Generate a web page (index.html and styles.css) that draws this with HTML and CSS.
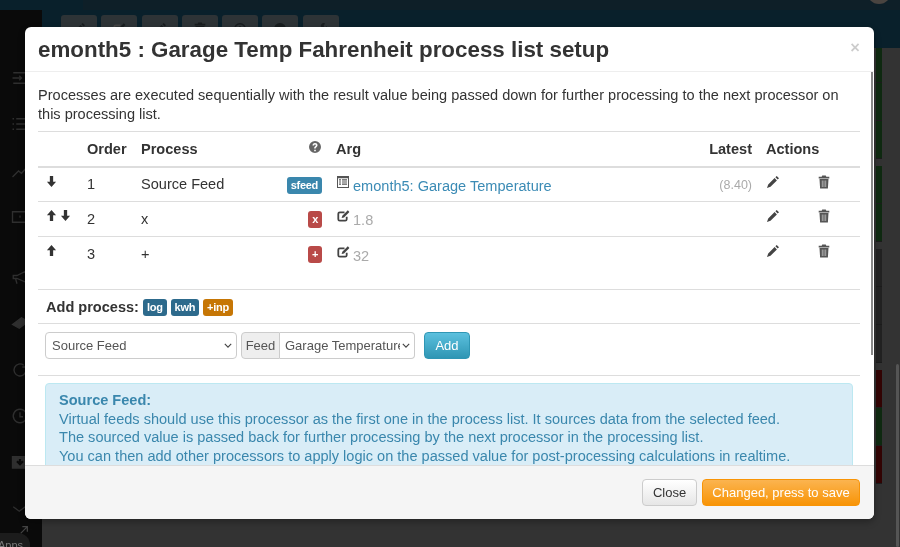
FILE: index.html
```html
<!DOCTYPE html>
<html lang="en">
<head>
<meta charset="utf-8">
<title>Process list setup</title>
<link rel="stylesheet" href="styles.css">
</head>
<body>
<svg class="defs" width="0" height="0" aria-hidden="true">
  <symbol id="i-down" viewBox="0 0 12 14"><path d="M4.200 1h3.600v6.200H11L6 13 1 7.200h3.200z"/></symbol>
  <symbol id="i-up" viewBox="0 0 12 14"><path d="M4.200 13h3.600V6.800H11L6 1 1 6.800h3.200z"/></symbol>
  <symbol id="i-list" viewBox="0 0 14 14"><path fill-rule="evenodd" d="M1 1h12v12H1zM2 3.200V12h10V3.200zM3 4.200h2v1.200H3zM6 4.200h5v1.200H6zM3 6.400h2v1.200H3zM6 6.400h5v1.200H6zM3 8.600h2v1.200H3zM6 8.600h5v1.200H6z"/></symbol>
  <symbol id="i-edit" viewBox="0 0 14 14"><path d="M8.500 3.300H3.800A1.500 1.500 0 0 0 2.300 4.800v5.400a1.500 1.500 0 0 0 1.500 1.500h5.400a1.500 1.500 0 0 0 1.500-1.500V7.700" fill="none" stroke="#444" stroke-width="1.800"/><path d="M11.800 1.300l1.600 1.600-5.400 5.500-2.400.7.700-2.400z"/></symbol>
  <symbol id="i-pencil" viewBox="0 0 14 14"><path d="M10.700 1l2.300 2.300-1.300 1.300-2.300-2.300zM8.600 3.100l2.300 2.300-6.400 6.400L1 13l1.200-3.500z"/></symbol>
  <symbol id="i-trash" viewBox="0 0 14 14"><path fill-rule="evenodd" d="M5.200 .6h3.600l.5 1.200h3v1.600H1.700V1.800h3zM2.500 4.100h9l-.6 9.300H3.100zM4.900 5.400v6.600h.5V5.400zM6.750 5.400v6.600h.5V5.400zM8.600 5.400v6.600h.5V5.400z"/></symbol>
  <symbol id="i-help" viewBox="0 0 14 14"><path fill-rule="evenodd" d="M7 1a6 6 0 1 1 0 12A6 6 0 0 1 7 1zM6.200 9.800v1.500h1.600V9.800zM4.500 5.500h1.600c0-.7.300-1 .9-1s.9.300.9.800c0 .4-.3.700-.7 1-.7.500-1 1-1 1.900v.3h1.500v-.2c0-.5.200-.8.700-1.100.7-.5 1.100-1 1.100-1.900C9.500 3.900 8.500 3 7 3S4.500 3.900 4.500 5.500z"/></symbol>
  <symbol id="i-clock" viewBox="0 0 14 14"><path fill-rule="evenodd" d="M7 1a6 6 0 1 1 0 12A6 6 0 0 1 7 1zm0 1.500a4.500 4.500 0 1 0 0 9 4.500 4.500 0 0 0 0-9zM6.300 4h1.400v3.500H6.300z"/></symbol>
  <symbol id="i-globe" viewBox="0 0 14 14"><path d="M7 1a6 6 0 1 1 0 12A6 6 0 0 1 7 1z"/></symbol>
  <symbol id="i-wrench" viewBox="0 0 14 14"><path d="M10 1a3 3 0 0 0-3 4L1.500 10.500 3.500 12.500 9 7a3 3 0 0 0 4-3l-2 1.500L9.500 4 11 1.500z"/></symbol>
</svg>

<div class="page">
  <header class="topbar"><span class="topbar-brand"></span><span class="avatar"></span></header>
  <div class="workspace">
    <nav class="sidebar">
      <svg class="nav-icon" viewBox="0 0 24 24"><path d="M3 5h18v14H3M2 12h12M11 9l3 3-3 3"/></svg>
      <svg class="nav-icon" viewBox="0 0 24 24"><path d="M7 5h15M7 12h15M7 19h15M2 5h2M2 12h2M2 19h2"/></svg>
      <svg class="nav-icon" viewBox="0 0 24 24"><path d="M2 20l8-8 4 3 8-9"/></svg>
      <svg class="nav-icon" viewBox="0 0 24 24"><path d="M2 5h20v14H2zM12 10v3"/></svg>
      <svg class="nav-icon group-start" viewBox="0 0 24 24"><path d="M3 10h5l12-6v15L8 14H3zM6 14l2 7"/></svg>
      <svg class="nav-icon" viewBox="0 0 24 24"><path class="solid" d="M2 14l12-9 9 5-12 9z"/></svg>
      <svg class="nav-icon" viewBox="0 0 24 24"><path d="M20 12a8 8 0 1 1-3-6.300M20 3v5h-5"/></svg>
      <svg class="nav-icon" viewBox="0 0 24 24"><path d="M12 3a9 9 0 1 0 .01 0M12 7v6h4"/></svg>
      <svg class="nav-icon" viewBox="0 0 24 24"><path class="solid" d="M2 5h20v15H2z"/><path class="cut" d="M12 8v7M8 11l4 4 4-4"/></svg>
      <svg class="nav-icon" viewBox="0 0 24 24"><path d="M3 9l8 6 8-6"/></svg>
      <svg class="apps-arrow" viewBox="0 0 12 12"><path d="M2 10l8-8M4 2h6v6"/></svg>
      <span class="apps">Apps</span>
    </nav>
    <main class="content">
      <div class="toolbar">
        <span class="tool"><svg class="tool-icon"><use href="#i-pencil"/></svg></span>
        <span class="tool"><svg class="tool-icon"><use href="#i-edit"/></svg></span>
        <span class="tool"><svg class="tool-icon"><use href="#i-pencil"/></svg></span>
        <span class="tool"><svg class="tool-icon"><use href="#i-trash"/></svg></span>
        <span class="tool"><svg class="tool-icon"><use href="#i-clock"/></svg></span>
        <span class="tool"><svg class="tool-icon"><use href="#i-globe"/></svg></span>
        <span class="tool"><svg class="tool-icon"><use href="#i-wrench"/></svg></span>
      </div>
      <div class="feed-rows">
        <div class="feed-group">
          <div class="feed-row green"></div><div class="feed-row green"></div><div class="feed-row green"></div>
        </div>
        <div class="feed-group">
          <div class="feed-row green"></div><div class="feed-row green"></div>
        </div>
        <div class="feed-group">
          <div class="feed-row grey"></div><div class="feed-row grey"></div><div class="feed-row grey"></div>
        </div>
        <div class="feed-group">
          <div class="feed-row red"></div><div class="feed-row green"></div><div class="feed-row red"></div>
        </div>
      </div>
    </main>
  </div>
  <span class="page-scrollbar"></span>
</div>

<section class="modal">
  <div class="modal-header">
    <h3 class="modal-title">emonth5 : Garage Temp Fahrenheit process list setup</h3>
    <span class="close-x">×</span>
  </div>
  <div class="modal-body">
    <span class="scroll-thumb"></span>
    <p class="intro">Processes are executed sequentially with the result value being passed down for further processing to the next processor on this processing list.</p>
    <table class="process-table">
      <thead>
        <tr>
          <th class="c-move"></th>
          <th class="c-order">Order</th>
          <th class="c-process">Process</th>
          <th class="c-type"><svg class="icon help"><use href="#i-help"/></svg></th>
          <th class="c-arg">Arg</th>
          <th class="c-latest">Latest</th>
          <th class="c-actions">Actions</th>
        </tr>
      </thead>
      <tbody>
        <tr>
          <td class="c-move"><svg class="icon arrow"><use href="#i-down"/></svg></td>
          <td>1</td>
          <td>Source Feed</td>
          <td class="c-type"><span class="badge blue">sfeed</span></td>
          <td class="c-arg"><svg class="icon list"><use href="#i-list"/></svg><a class="feed-link">emonth5: Garage Temperature</a></td>
          <td class="c-latest"><span class="muted-small">(8.40)</span></td>
          <td class="c-actions"><span class="actions"><svg class="icon"><use href="#i-pencil"/></svg><svg class="icon trash"><use href="#i-trash"/></svg></span></td>
        </tr>
        <tr>
          <td class="c-move"><svg class="icon arrow"><use href="#i-up"/></svg><svg class="icon arrow"><use href="#i-down"/></svg></td>
          <td>2</td>
          <td>x</td>
          <td class="c-type"><span class="badge red">x</span></td>
          <td class="c-arg"><svg class="icon"><use href="#i-edit"/></svg><span class="muted">1.8</span></td>
          <td class="c-latest"></td>
          <td class="c-actions"><span class="actions"><svg class="icon"><use href="#i-pencil"/></svg><svg class="icon trash"><use href="#i-trash"/></svg></span></td>
        </tr>
        <tr>
          <td class="c-move"><svg class="icon arrow"><use href="#i-up"/></svg></td>
          <td>3</td>
          <td>+</td>
          <td class="c-type"><span class="badge red">+</span></td>
          <td class="c-arg"><svg class="icon"><use href="#i-edit"/></svg><span class="muted">32</span></td>
          <td class="c-latest"></td>
          <td class="c-actions"><span class="actions"><svg class="icon"><use href="#i-pencil"/></svg><svg class="icon trash"><use href="#i-trash"/></svg></span></td>
        </tr>
      </tbody>
    </table>
    <div class="add-head">
      <span class="add-label">Add process:</span>
      <span class="badge navy">log</span><span class="badge navy">kwh</span><span class="badge amber">+inp</span>
    </div>
    <div class="add-form">
      <span class="select-wrap">
        <select class="select process-select"><option>Source Feed</option></select>
        <svg class="chevron" viewBox="0 0 10 6"><path d="M1 1l4 4 4-4"/></svg>
      </span>
      <div class="input-group">
        <span class="addon">Feed</span>
        <span class="select-wrap">
          <select class="select feed-select"><option>Garage Temperature</option></select>
          <svg class="chevron" viewBox="0 0 10 6"><path d="M1 1l4 4 4-4"/></svg>
        </span>
      </div>
      <button class="btn btn-add">Add</button>
    </div>
    <div class="info">
      <strong>Source Feed:</strong><br>
      Virtual feeds should use this processor as the first one in the process list. It sources data from the selected feed.<br>
      The sourced value is passed back for further processing by the next processor in the processing list.<br>
      You can then add other processors to apply logic on the passed value for post-processing calculations in realtime.
    </div>
  </div>
  <div class="modal-footer">
    <button class="btn btn-close">Close</button>
    <button class="btn btn-save">Changed, press to save</button>
  </div>
</section>
</body>
</html>
```

FILE: styles.css
```css
* { box-sizing: border-box; }
html, body { margin: 0; height: 100%; overflow: hidden; }
body { font-family: "Liberation Sans", Arial, sans-serif; font-size: 14.56px; color: #333; background: #333; filter: blur(.4px); }
.defs { position: absolute; }

.page { height: 547px; display: flex; flex-direction: column; position: relative; }
.topbar { height: 10px; background: #0e1f28; flex: none; position: relative; }
.topbar-brand { display: block; width: 83px; height: 10px; background: #09202b; }
.avatar { position: absolute; right: 9px; top: -20px; width: 24px; height: 24px; border-radius: 50%; background: #4a4440; }
.workspace { flex: 1; display: flex; min-height: 0; }
.sidebar { width: 42px; flex: none; background: #0a0a0a; display: flex; flex-direction: column; align-items: flex-start; padding: 59px 0 0 11px; gap: 28.300px; overflow: hidden; position: relative; }
.nav-icon { width: 18px; height: 18px; fill: none; stroke: #2f2f2f; stroke-width: 1.800; flex: none; }
.nav-icon .solid { fill: #2f2f2f; }
.nav-icon .cut { stroke: #0a0a0a; stroke-width: 3; }
.group-start { margin-top: 14px; }
.apps-arrow { position: absolute; left: 19px; top: 515px; width: 10px; height: 10px; fill: none; stroke: #444; stroke-width: 1.500; }
.apps { position: absolute; left: -14px; top: 523px; width: 44px; height: 26px; border-radius: 12px; background: #1c1c1c; color: #777; font-size: 11px; line-height: 25px; padding-left: 12px; }
.content { flex: 1; background: #333; min-width: 0; }
.toolbar { height: 38px; background: #09202b; display: flex; gap: 4.300px; padding: 5px 0 0 19px; }
.tool { width: 36px; height: 28px; background: #2d3336; border-radius: 3px; display: flex; justify-content: center; padding-top: 7px; }
.tool-icon { width: 14px; height: 14px; fill: #181d1f; }
.feed-rows { margin-left: 834px; width: 6px; display: flex; flex-direction: column; gap: 7px; }
.feed-group { display: flex; flex-direction: column; }
.feed-row { height: 38px; border-bottom: 1px solid #1c1c1c; }
.feed-group:first-child .feed-row:first-child { height: 35px; }
.feed-row.green { background: #0f2a11; }
.feed-row.grey { background: #222; }
.feed-row.red { background: #330404; }
.page-scrollbar { position: absolute; right: 1px; top: 364px; width: 3px; height: 183px; background: #555; border-radius: 2px; }

.modal { position: absolute; left: 25px; top: 27px; width: 849px; height: 492px; background: #fff; border-radius: 6px; box-shadow: 0 3px 7px rgba(0,0,0,.3); display: flex; flex-direction: column; overflow: hidden; }
.modal-header { height: 45px; flex: none; padding: 2px 14px 0 13px; border-bottom: 1px solid #eee; display: flex; align-items: center; justify-content: space-between; }
.modal-title { margin: 0; font-size: 22.360px; font-weight: 700; line-height: 40px; color: #333; }
.close-x { font-size: 16.500px; font-weight: 700; color: #000; opacity: .2; line-height: 20px; margin-top: -6px; }
.modal-body { flex: 1; min-height: 0; overflow: hidden; position: relative; padding: 14px 13px 0; }
.scroll-thumb { position: absolute; right: 1px; top: 0; width: 2px; height: 283px; background: #888; }
.intro { margin: 0; line-height: 18.500px; height: 46px; border-bottom: 1px solid #ddd; width: 822px; }

.process-table { width: 822px; border-collapse: collapse; table-layout: fixed; }
.process-table th { height: 35px; font-weight: 700; text-align: left; border-bottom: 2px solid #ddd; padding: 0; }
.process-table td { height: 35px; padding: 0; border-top: 1px solid #ddd; vertical-align: middle; }
.process-table tbody tr:first-child td { border-top: 0; height: 34px; }
.process-table .c-move { width: 49px; padding-left: 8px; }
.c-order { width: 54px; }
.c-process { width: 145px; }
.process-table .c-type { width: 42px; text-align: right; padding-right: 6px; }
.process-table .c-arg { width: 364px; padding-left: 8px; }
.process-table .c-latest { width: 68px; text-align: right; padding-right: 8px; }
.process-table .c-actions { width: 100px; padding-left: 6px; }
.actions { display: flex; gap: 37px; margin-bottom: 5px; }
.icon { width: 14px; height: 14px; fill: #444; vertical-align: 1.500px; }
.c-arg .icon { margin-right: 3px; }
.list { fill: #555; }
.trash { fill: #555; }
.arrow { width: 11px; height: 13px; margin-right: 3px; fill: #333; vertical-align: 3px; }
.help { fill: #666; vertical-align: 2px; }
.feed-link { color: #3b8bb5; }
.muted { color: #aaa; }
.muted-small { color: #aaa; font-size: 12.500px; }
.badge { display: inline-block; border-radius: 3px; color: #fff; font-size: 11px; font-weight: 700; letter-spacing: -.3px; line-height: 14px; padding: 1px 4px 2px; vertical-align: -1px; }
.badge.blue { background: #3a87ad; }
.badge.red { background: #b94a48; }
.badge.navy { background: #2d6a8c; margin-left: 4px; }
.badge.amber { background: #c67605; margin-left: 4px; }

.add-head { margin-top: 18px; height: 35px; border-top: 1px solid #ddd; border-bottom: 1px solid #ddd; padding-left: 8px; display: flex; align-items: center; width: 822px; }
.add-label { font-weight: 700; }
.add-head .badge { margin-top: 2px; }
.add-form { height: 52px; border-bottom: 1px solid #ddd; width: 822px; display: flex; align-items: flex-start; padding: 8px 0 0 7px; }
.select-wrap { display: block; position: relative; height: 27px; }
.select { appearance: none; display: block; height: 27px; font-family: inherit; font-size: 13px; color: #555; background: #fff; border: 1px solid #ccc; border-radius: 4px; }
.process-select { width: 192px; padding: 0 20px 0 6px; }
.feed-select { width: 135px; padding: 0 14px 0 5px; border-radius: 0 4px 4px 0; border-left: 0; }
.chevron { position: absolute; right: 5px; top: 11px; width: 8px; height: 5px; fill: none; stroke: #444; stroke-width: 1.400; pointer-events: none; }
.input-group { display: flex; margin-left: 4px; }
.addon { height: 27px; width: 39px; background: #eee; border: 1px solid #ccc; border-radius: 4px 0 0 4px; font-size: 13px; line-height: 25px; text-align: center; color: #555; }
.btn { font-family: inherit; font-size: 13px; border-radius: 4px; height: 27px; }
.btn-add { width: 46px; margin-left: 9px; color: #fff; border: 1px solid #2f96b4; background: linear-gradient(#5bc0de, #2f96b4); }

.info { margin: 7px 7px 0; padding: 7px 13px; background: #d9edf7; border: 1px solid #bce8f1; border-radius: 4px; color: #3a87ad; line-height: 18.500px; height: 120px; width: 808px; }
.modal-footer { height: 54px; flex: none; background: #f5f5f5; border-top: 1px solid #ddd; display: flex; justify-content: flex-end; align-items: flex-start; gap: 5px; padding: 13px 14px 0 0; }
.btn-close { width: 55px; color: #333; border: 1px solid #ccc; background: linear-gradient(#fff, #e6e6e6); }
.btn-save { width: 158px; color: #fff; border: 1px solid #f89406; background: linear-gradient(#fbb450, #f89406); }
```
